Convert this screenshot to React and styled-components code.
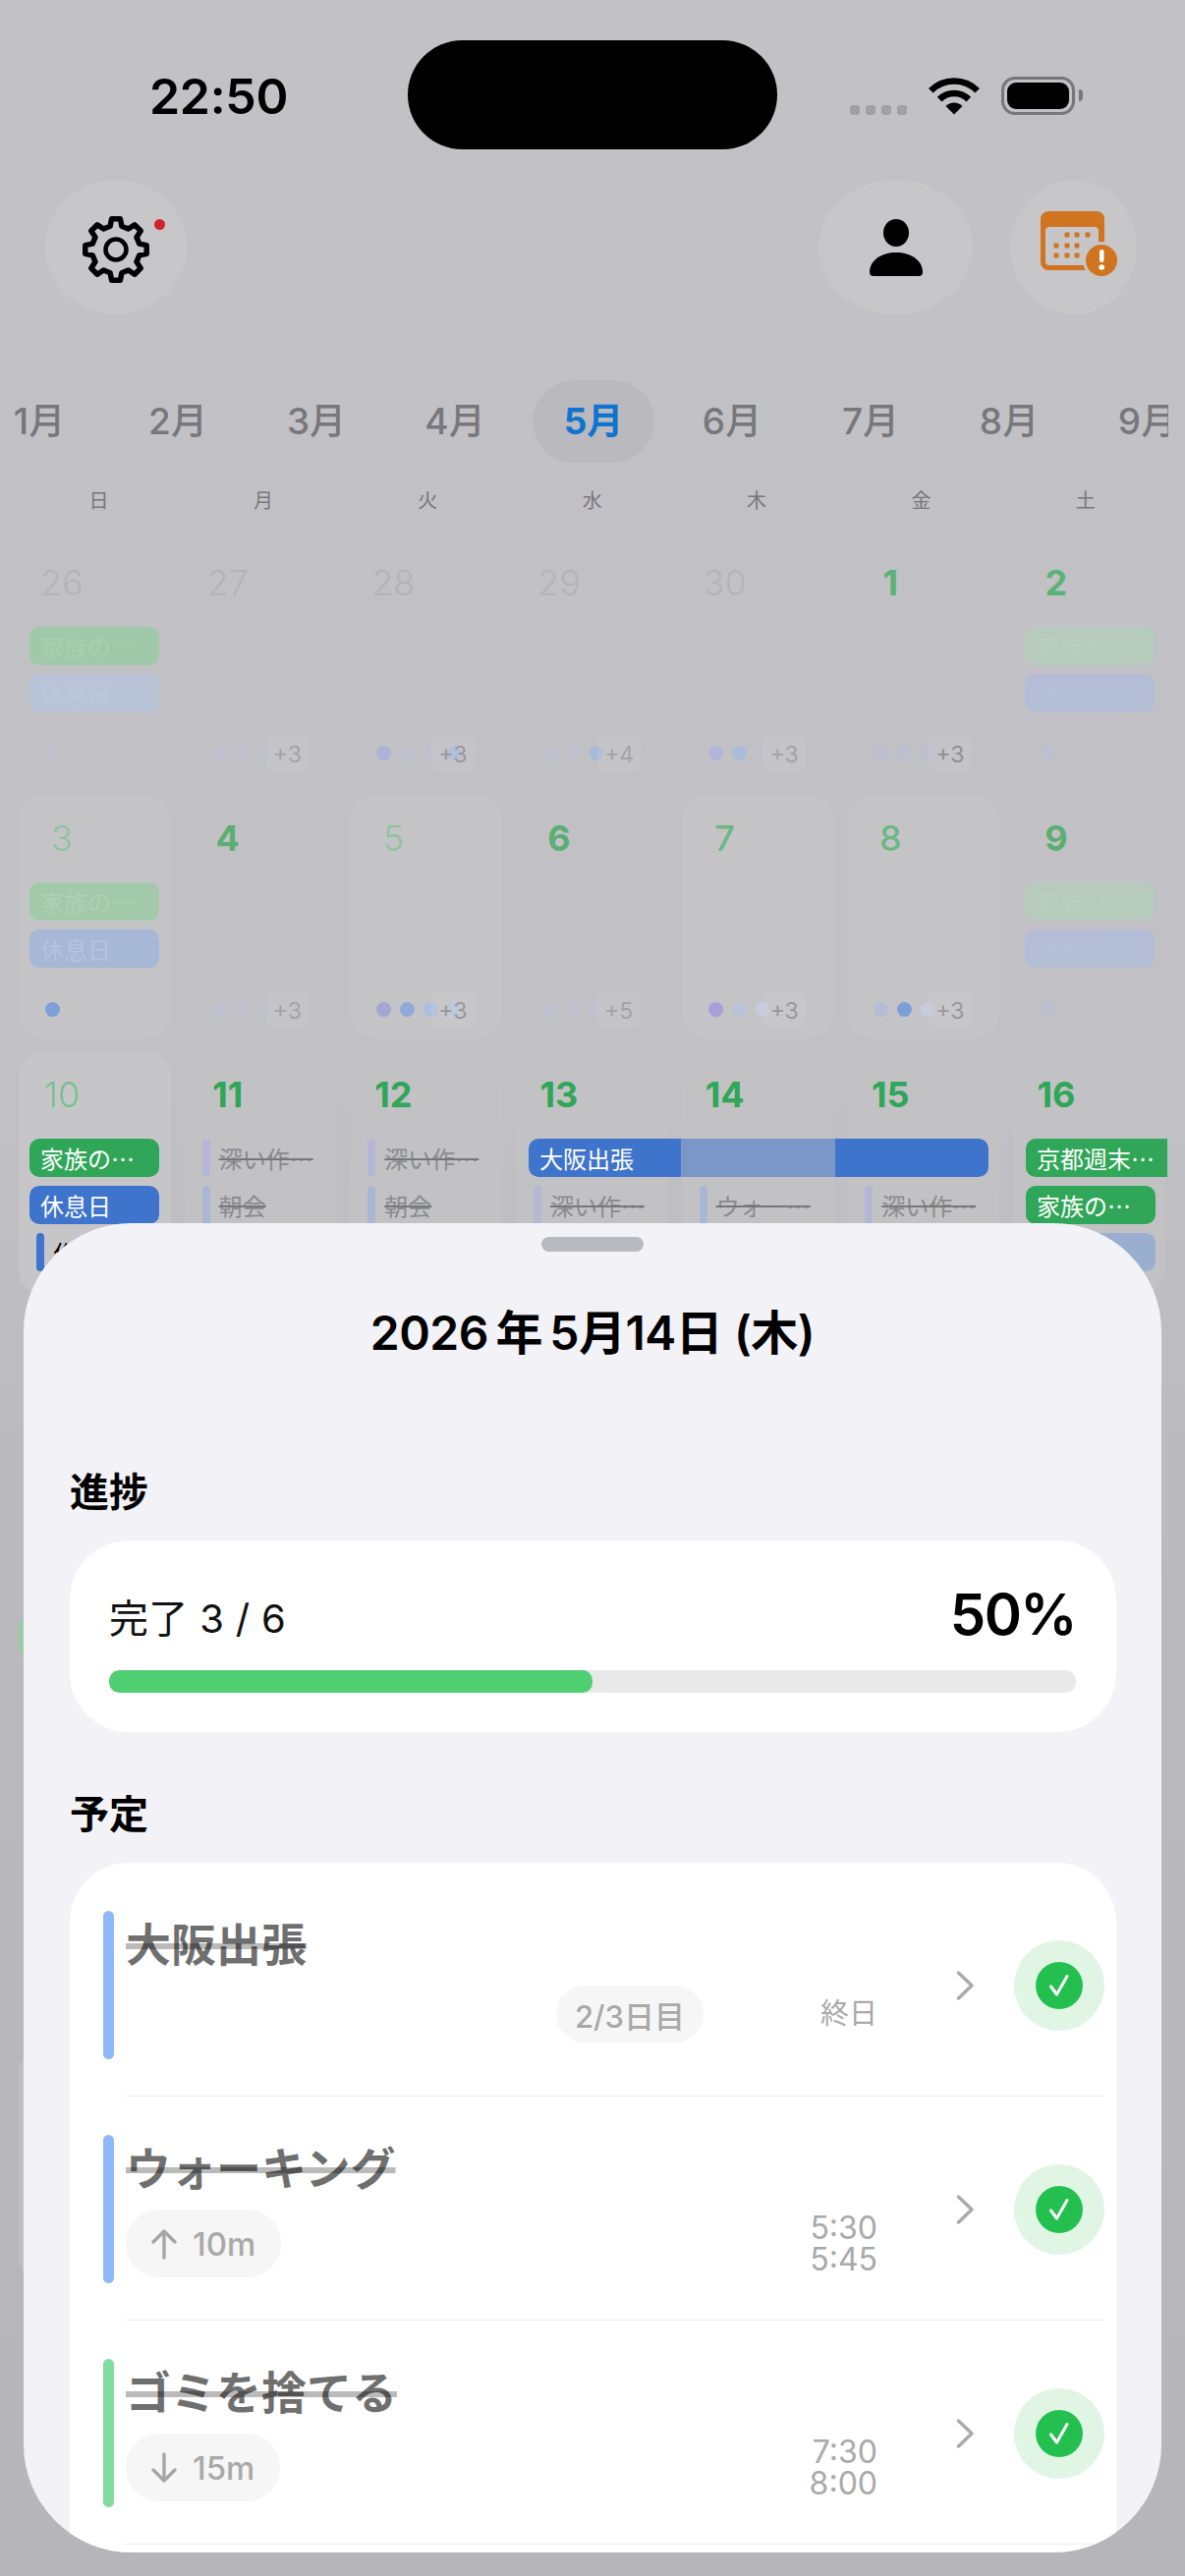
import React from 'react'
import styled, { createGlobalStyle } from 'styled-components'

const Global = createGlobalStyle`
  html, body { margin: 0; padding: 0; }
  body { font-family: Inter, "Noto Sans CJK JP", sans-serif; background: #c1c1c6; }
`

const Page = styled.div`
  position: relative;
  width: 1206px;
  height: 2622px;
  overflow: hidden;
  background: linear-gradient(180deg, #c1c1c6 0, #c1c1c5 1100px, #bbbbbf 1500px, #b6b6ba 100%);
`

const StatusBar = styled.div`
  display: flex;
  align-items: center;
  padding-top: 41px;
  height: 111px;
`
const Time = styled.div`
  width: 263px;
  padding-left: 152px;
  font-size: 50px;
  line-height: 60px;
  font-weight: 600;
  color: #000;
  letter-spacing: -0.3px;
  margin-top: 3px;
`
const Island = styled.div`
  width: 376px;
  height: 111px;
  border-radius: 56px;
  background: #000;
`
const StatusRight = styled.div`
  display: flex;
  align-items: flex-end;
  padding-left: 74px;
  height: 39px;
  margin-top: 1px;
`
const SignalDots = styled.div`
  display: flex;
  gap: 6px;
  margin-right: 22px;
`
const SignalDot = styled.span`
  width: 10px;
  height: 10px;
  border-radius: 3px;
  background: #a1a1a5;
`
const Battery = styled.div`
  position: relative;
  box-sizing: border-box;
  width: 75px;
  height: 39px;
  margin-left: 22px;
  padding: 3px;
  border: 3px solid #77777b;
  border-radius: 14px;

  &::before {
    content: '';
    display: block;
    height: 100%;
    background: #000;
    border-radius: 9px;
  }
  &::after {
    content: '';
    position: absolute;
    right: -11px;
    top: 10px;
    width: 4px;
    height: 12px;
    background: #77777b;
    border-radius: 0 6px 6px 0;
  }
`

const Toolbar = styled.div`
  display: flex;
  align-items: center;
  margin-top: 31px;
  padding: 0 49px 0 46px;
`
const RoundButton = styled.div`
  position: relative;
  width: ${p => p.$w}px;
  height: 137px;
  margin-left: ${p => p.$ml || 0}px;
  border-radius: 50%;
  background: #c7c7c9;
  display: flex;
  align-items: center;
  justify-content: center;
`
const RedDot = styled.span`
  position: absolute;
  left: 111px;
  top: 40px;
  width: 11px;
  height: 11px;
  border-radius: 50%;
  background: #d0242c;
`

const Months = styled.div`
  display: flex;
  gap: 17px;
  width: 1211px;
  margin: 67px 0 0 -22px;
  overflow: hidden;
`
const Month = styled.div`
  flex: 0 0 124px;
  height: 84px;
  border-radius: 42px;
  background: ${p => (p.$active ? '#b9b9be' : 'transparent')};
  color: ${p => (p.$active ? '#0f74d0' : '#77777c')};
  font-size: 37px;
  font-weight: ${p => (p.$active ? 700 : 500)};
  line-height: 84px;
  text-align: center;
`

const Weekdays = styled.div`
  display: grid;
  grid-template-columns: repeat(7, 155px);
  column-gap: 12.4px;
  padding-left: 23px;
  margin-top: 24px;
  color: #77777c;
  font-size: 20px;
  line-height: 30px;
  text-align: center;
`

const Calendar = styled.div`
  display: flex;
  flex-direction: column;
  row-gap: 13px;
  margin-top: 24px;
  padding-left: 19px;
`
const Week = styled.div`
  display: grid;
  grid-template-columns: repeat(7, 155px);
  column-gap: 13.67px;
  height: ${p => p.$h}px;
`
const Cell = styled.div`
  display: flex;
  flex-direction: column;
  min-width: 0;
  border-radius: 26px;
  background: ${p => p.$bg || 'transparent'};
`
const DayNum = styled.div`
  width: 88px;
  height: 89px;
  line-height: 88px;
  text-align: center;
  font-size: 36px;
  font-weight: ${p => p.$w};
  color: ${p => p.$c};
`
const Events = styled.div`
  display: flex;
  flex-direction: column;
  row-gap: 9px;
`
const Pill = styled.div`
  box-sizing: border-box;
  width: ${p => p.$width || 132}px;
  height: 39px;
  margin-left: ${p => (p.$ml !== undefined ? p.$ml : 11)}px;
  padding-left: 11px;
  border-radius: ${p => (p.$flat ? '10px 0 0 10px' : '10px')};
  background: ${p => p.$bg};
  color: ${p => p.$c || '#fff'};
  font-family: "Noto Sans CJK JP", sans-serif;
  font-size: 24px;
  line-height: 39px;
  white-space: nowrap;
  overflow: hidden;
`
const SpanPill = styled(Pill)`
  position: relative;
  z-index: 1;
  background: linear-gradient(90deg, #3f74cd 155px, #7b97c8 155px, #7b97c8 312px, #3f74cd 312px);
`
const PillGap = styled.div`
  height: 39px;
`
const Task = styled.div`
  display: flex;
  align-items: center;
  height: 39px;
  margin-left: 18px;
  column-gap: 9px;
`
const TaskBar = styled.span`
  flex: 0 0 8px;
  height: 39px;
  border-radius: 4px;
  background: ${p => p.$c};
`
const TaskText = styled.span`
  font-family: "Noto Sans CJK JP", sans-serif;
  font-size: 24px;
  white-space: nowrap;
  color: ${p => (p.$done ? '#8a8a8e' : '#000')};
  text-decoration: ${p => (p.$done ? 'line-through' : 'none')};
  text-decoration-thickness: 2px;
  text-decoration-color: #77777b;
`
const DotRow = styled.div`
  position: relative;
  display: flex;
  column-gap: 9px;
  height: 30px;
  align-items: center;
  margin-top: auto;
  margin-bottom: 15px;
  padding-left: 27px;
`
const Dot = styled.span`
  width: 15px;
  height: 15px;
  border-radius: 50%;
  background: ${p => p.$c};
`
const More = styled.span`
  position: absolute;
  left: 83px;
  top: -2px;
  padding: 0 7px;
  height: 36px;
  line-height: 38px;
  border-radius: 6px;
  font-size: 23px;
  color: ${p => p.$c || '#a3a3a7'};
  background: rgba(205, 205, 208, 0.3);
`

/* 下のシート */
const Sheet = styled.div`
  position: absolute;
  left: 24px;
  top: 1245px;
  width: 1158px;
  height: 1353px;
  border-radius: 110px;
  overflow: hidden;
  background: #f2f2f7;
`
const Handle = styled.div`
  width: 104px;
  height: 15px;
  margin: 14px auto 0;
  border-radius: 8px;
  background: #b9b9c0;
`
const SheetTitle = styled.div`
  margin-top: 53px;
  font-size: 48px;
  line-height: 60px;
  font-weight: 600;
  letter-spacing: -0.5px;
  text-align: center;
  color: #000;
`
const SectionLabel = styled.div`
  margin: ${p => p.$mt}px 0 24px 47px;
  font-size: 40px;
  line-height: 50px;
  font-weight: 700;
  color: #000;
`
const ProgressCard = styled.div`
  box-sizing: border-box;
  height: 195px;
  margin: 0 46px 0 47px;
  padding: 40px 41px 0 40px;
  border-radius: 60px;
  background: #fff;
`
const ProgressHead = styled.div`
  display: flex;
  justify-content: space-between;
  align-items: flex-start;
  height: 70px;
`
const DoneText = styled.span`
  font-size: 40px;
  line-height: 80px;
  letter-spacing: 0.3px;
  color: #111;
`
const Percent = styled.span`
  font-size: 58px;
  line-height: 70px;
  font-weight: 600;
  letter-spacing: -1.6px;
  color: #000;
`
const Track = styled.div`
  height: 23px;
  margin-top: 22px;
  border-radius: 10px;
  background: #e9e9ea;
  overflow: hidden;
`
const Fill = styled.div`
  height: 100%;
  border-radius: 10px;
  background: #50cf72;
`
const ListCard = styled.div`
  margin: 0 46px 0 47px;
  padding-top: 10px;
  min-height: 800px;
  border-radius: 60px;
  background: #fff;
`
const Row = styled.div`
  display: flex;
  align-items: center;
  padding: 39px 12px 37px 34px;
`
const RowBar = styled.div`
  flex: 0 0 11px;
  height: 151px;
  margin-right: 12px;
  border-radius: 6px;
  background: ${p => p.$c};
`
const RowBody = styled.div`
  flex: 1;
  align-self: flex-start;
`
const RowTitle = styled.div`
  height: 68px;
  line-height: 68px;
  font-size: 46px;
  font-weight: 600;
  color: rgba(0, 0, 0, 0.56);
  text-decoration: line-through;
  text-decoration-color: rgba(0, 0, 0, 0.27);
  text-decoration-thickness: 6px;
`
const Meta = styled.div`
  display: flex;
  align-items: center;
  margin-top: 8px;
`
const Chip = styled.div`
  display: flex;
  align-items: center;
  box-sizing: border-box;
  height: ${p => p.$h}px;
  padding: 0 ${p => p.$pad}px;
  column-gap: 16px;
  border-radius: 34px;
  background: #f6f6f6;
  color: #a9a9a9;
  font-size: ${p => p.$fs}px;
  font-weight: 500;
  margin-left: ${p => (p.$right ? 'auto' : '0')};
  margin-right: ${p => (p.$right ? '0' : 'auto')};
`
const TimeCol = styled.div`
  flex: 0 0 ${p => p.$w}px;
  margin-right: -1px;
  text-align: right;
  color: #a9a9a9;
  font-size: ${p => p.$fs || 32}px;
  line-height: 32px;
`
const Divider = styled.div`
  height: 1px;
  margin: 0 12px 0 57px;
  background: #ececec;
`
const Chevron = styled.svg`
  flex: 0 0 18px;
  width: 18px;
  height: 30px;
  margin-left: 81px;
`
const CheckWrap = styled.div`
  flex: 0 0 92px;
  width: 92px;
  height: 92px;
  margin-left: 41px;
  border-radius: 50%;
  background: #e1f5e5;
  display: flex;
  align-items: center;
  justify-content: center;
`

const gearPath = (() => {
  const pts = []
  for (let i = 0; i < 8; i++) {
    const a = i * 45 - 90
    ;[[24.5, -14], [31.5, -8], [31.5, 8], [24.5, 14]].forEach(([r, d]) => {
      const t = ((a + d) * Math.PI) / 180
      pts.push(`${(36 + r * Math.cos(t)).toFixed(1)} ${(36 + r * Math.sin(t)).toFixed(1)}`)
    })
  }
  return 'M' + pts.join('L') + 'Z'
})()

const GearSvg = styled.svg`
  margin-top: 4px;
`
const Gear = () => (
  <GearSvg width="72" height="72" viewBox="0 0 72 72" fill="none" stroke="#000" strokeLinejoin="round">
    <path d={gearPath} strokeWidth="5.5" />
    <circle cx="36" cy="36" r="10.5" strokeWidth="4.5" />
  </GearSvg>
)

const Wifi = () => (
  <svg width="52" height="38" viewBox="0 0 52 38" fill="none">
    <path d="M2.3 13.3A33.5 33.5 0 0 1 49.7 13.3" stroke="#000" strokeWidth="6.5" />
    <path d="M11.15 22.15A21 21 0 0 1 40.85 22.15" stroke="#000" strokeWidth="6.5" />
    <path d="M26 37.5L17.5 29A12 12 0 0 1 34.5 29Z" fill="#000" />
  </svg>
)

const Person = () => (
  <svg width="54" height="58" viewBox="0 0 54 58" fill="#000">
    <ellipse cx="27" cy="14" rx="13" ry="14" />
    <path d="M4 58H50Q54 58 54 54C54 42 42 34 27 34C12 34 0 42 0 54Q0 58 4 58Z" />
  </svg>
)

const calDots = [[27, 24], [37, 24], [48, 24], [16, 35], [27, 35], [37, 35], [16, 45], [27, 45], [37, 45]]

const CalSvg = styled.svg`
  margin: 4px 0 0 14px;
`
const CalendarAlert = () => (
  <CalSvg width="82" height="78" viewBox="0 0 82 78">
    <rect x="0" y="0" width="65" height="60" rx="8" fill="#d1741f" />
    <rect x="5" y="16" width="54" height="39" rx="4" fill="#c6c6c8" />
    {calDots.map(([x, y]) => (
      <rect key={x + '-' + y} x={x - 2.5} y={y - 2.5} width="5" height="5" rx="1" fill="#d1741f" />
    ))}
    <circle cx="62" cy="50" r="19" fill="#c6c6c8" />
    <circle cx="62" cy="50" r="16" fill="#d1741f" />
    <rect x="60" y="39" width="4.5" height="13" rx="2.2" fill="#fff" />
    <circle cx="62.2" cy="57" r="2.8" fill="#fff" />
  </CalSvg>
)

const ChevronIcon = () => (
  <Chevron viewBox="0 0 18 30" fill="none" stroke="#a9a9a9" strokeWidth="3.4" strokeLinecap="round" strokeLinejoin="round">
    <path d="M2.5 2L16 15L2.5 28" />
  </Chevron>
)

const Check = () => (
  <CheckWrap>
    <svg width="48" height="48" viewBox="0 0 48 48">
      <circle cx="24" cy="24" r="24" fill="#23c04f" />
      <path d="M15.5 25L21.5 33L32 14.5" fill="none" stroke="#fff" strokeWidth="3" strokeLinecap="round" strokeLinejoin="round" />
    </svg>
  </CheckWrap>
)

const Arrow = ({ down }) => (
  <svg width="26" height="32" viewBox="0 0 26 32" fill="none" stroke="#a6a6a6" strokeWidth="3.4" strokeLinecap="round" strokeLinejoin="round">
    <path d={down ? 'M13 2V29M2 18L13 29L24 18' : 'M13 30V3M2 14L13 3L24 14'} />
  </svg>
)

const months = ['1月', '2月', '3月', '4月', '5月', '6月', '7月', '8月', '9月']
const weekdays = ['日', '月', '火', '水', '木', '金', '土']

const G_FADE = '#a0c9a9'
const G_PALE = '#b6cbbc'
const B_FADE = '#b9c3d6'
const B_PALE = '#b3bdd5'
const GREEN = '#2fa658'
const BLUE = '#3f74cd'
const LIGHT = '#c4c4c7'
const SOFT = '#c2c2c5'
const GREY_N = '#b4b4b8'
const F1 = '#bdbfd0'
const F2 = '#c0c1cc'

const week1 = [
  { n: 26, c: GREY_N, w: 300, events: [{ t: '家族の…', bg: G_FADE, c: '#a8cfb1' }, { t: '休息日', bg: B_FADE, c: '#bcc7da' }], dots: [F2] },
  { n: 27, c: GREY_N, w: 300, dots: [F2, F2, F2], more: 3 },
  { n: 28, c: GREY_N, w: 300, dots: ['#b0b0d8', F2, F2, '#a9bbdb'], more: 3, moreC: '#98989c' },
  { n: 29, c: GREY_N, w: 300, dots: [F2, F2, '#a8bada'], more: 4 },
  { n: 30, c: GREY_N, w: 300, dots: ['#b3b6d8', '#a9bcd9', F2], more: 3 },
  { n: 1, c: '#5cb377', w: 700, dots: [F1, F1, F1], more: 3, moreC: '#8f8f93' },
  { n: 2, c: '#5cb377', w: 700, events: [{ t: '家族の…', bg: G_PALE, c: '#bacfc0', ml: 12 }, { t: '休息日', bg: B_PALE, c: '#b7c0d7', ml: 12 }], dots: [F1] },
]

const week2 = [
  { n: 3, c: '#8cc59c', w: 300, bg: LIGHT, events: [{ t: '家族の…', bg: '#a2c9aa', c: '#aed1b6' }, { t: '休息日', bg: '#a6b8d6', c: '#b5c3dd' }], dots: ['#7e9fd8'] },
  { n: 4, c: '#5cae73', w: 700, dots: [F2, F2, F2], more: 3 },
  { n: 5, c: '#8cc59c', w: 300, bg: LIGHT, dots: ['#a5a4d3', '#8fa9d9', '#a9bfe0', '#b4c8df'], more: 3, moreC: '#98989c' },
  { n: 6, c: '#5cae73', w: 700, dots: [F2, F2, F2], more: 5 },
  { n: 7, c: '#6cb884', w: 500, bg: LIGHT, dots: ['#a69fd9', '#bcc1da', '#c8cbdc'], more: 3, moreC: '#98989c' },
  { n: 8, c: '#6cb884', w: 500, bg: LIGHT, dots: ['#b6bcd6', '#7d9fd9', '#c8cbdc'], more: 3, moreC: '#98989c' },
  { n: 9, c: '#5cae73', w: 700, events: [{ t: '家族の…', bg: G_PALE, c: '#bacfc0', ml: 12 }, { t: '休息日', bg: B_PALE, c: '#b7c0d7', ml: 12 }], dots: [F1] },
]

const deep = { task: '深い作…', bar: '#b6b6d6' }
const asakai = { task: '朝会', bar: '#a9b7d4' }

const week3 = [
  { n: 10, c: '#77c08e', w: 300, bg: '#c6c6c8', events: [{ t: '家族の…', bg: GREEN }, { t: '休息日', bg: BLUE }, { task: '作業', bar: BLUE, open: true }] },
  { n: 11, c: GREEN, w: 700, bg: SOFT, events: [deep, asakai] },
  { n: 12, c: GREEN, w: 700, bg: SOFT, events: [deep, asakai] },
  { n: 13, c: GREEN, w: 700, bg: SOFT, events: [{ t: '大阪出張', span: true }, deep] },
  { n: 14, c: GREEN, w: 700, bg: SOFT, events: [{ gap: true }, { task: 'ウォー…', bar: '#a9b7d4' }] },
  { n: 15, c: GREEN, w: 700, bg: SOFT, events: [{ gap: true }, deep] },
  { n: 16, c: GREEN, w: 700, bg: SOFT, events: [{ t: '京都週末…', bg: GREEN, ml: 13, width: 144, flat: true }, { t: '家族の…', bg: GREEN, ml: 13 }, { t: '', bg: '#9aaecf', ml: 13 }] },
]

const CalendarEvent = ({ e }) => {
  if (e.gap) return <PillGap />
  if (e.span) return <SpanPill $ml={13} $width={468} $bg={BLUE}>{e.t}</SpanPill>
  if (e.task) {
    return (
      <Task>
        <TaskBar $c={e.bar} />
        <TaskText $done={!e.open}>{e.task}</TaskText>
      </Task>
    )
  }
  return <Pill $bg={e.bg} $c={e.c} $ml={e.ml} $width={e.width} $flat={e.flat}>{e.t}</Pill>
}

const DayCell = ({ d }) => (
  <Cell $bg={d.bg}>
    <DayNum $c={d.c} $w={d.w}>{d.n}</DayNum>
    {d.events && (
      <Events>
        {d.events.map((e, i) => <CalendarEvent key={i} e={e} />)}
      </Events>
    )}
    {d.dots && (
      <DotRow>
        {d.dots.map((c, i) => <Dot key={i} $c={c} />)}
        {d.more && <More $c={d.moreC}>+{d.more}</More>}
      </DotRow>
    )}
  </Cell>
)

const ScheduleRow = ({ color, title, chip, time }) => (
  <Row>
    <RowBar $c={color} />
    <RowBody>
      <RowTitle>{title}</RowTitle>
      <Meta>
        {chip}
        {time}
      </Meta>
    </RowBody>
    <ChevronIcon />
    <Check />
  </Row>
)

export default function App() {
  return (
    <Page>
      <Global />
      <StatusBar>
        <Time>22:50</Time>
        <Island />
        <StatusRight>
          <SignalDots>
            {[0, 1, 2, 3].map(i => <SignalDot key={i} />)}
          </SignalDots>
          <Wifi />
          <Battery />
        </StatusRight>
      </StatusBar>

      <Toolbar>
        <RoundButton $w={144}>
          <Gear />
          <RedDot />
        </RoundButton>
        <RoundButton $w={157} $ml={643}><Person /></RoundButton>
        <RoundButton $w={129} $ml={38}><CalendarAlert /></RoundButton>
      </Toolbar>

      <Months>
        {months.map(m => <Month key={m} $active={m === '5月'}>{m}</Month>)}
      </Months>

      <Weekdays>
        {weekdays.map(w => <div key={w}>{w}</div>)}
      </Weekdays>

      <Calendar>
        <Week $h={247}>{week1.map(d => <DayCell key={d.n} d={d} />)}</Week>
        <Week $h={248}>{week2.map(d => <DayCell key={d.n} d={d} />)}</Week>
        <Week $h={248}>{week3.map(d => <DayCell key={d.n} d={d} />)}</Week>
        <Week $h={213} />
        <Week $h={247}>
          <Cell>
            <DayNum $c={GREEN} $w={700} />
            <Pill $ml={-1} $bg="#9fc8a9" />
          </Cell>
        </Week>
        <Week $h={253} />
        <Week $h={240}>
          <Cell $bg="#bfbfc3" />
        </Week>
      </Calendar>

      <Sheet>
        <Handle />
        <SheetTitle>2026&#8201;年&#8201;5月14日 (木)</SheetTitle>
        <SectionLabel $mt={107}>進捗</SectionLabel>
        <ProgressCard>
          <ProgressHead>
            <DoneText>完了 3 / 6</DoneText>
            <Percent>50%</Percent>
          </ProgressHead>
          <Track>
            <Fill style={{ width: '50%' }} />
          </Track>
        </ProgressCard>
        <SectionLabel $mt={59}>予定</SectionLabel>
        <ListCard>
          <ScheduleRow
            color="#8fb8fb"
            title="大阪出張"
            chip={<Chip $h={58} $pad={19} $fs={31} $right>2/3日目</Chip>}
            time={<TimeCol $w={177} $fs={29}>終日</TimeCol>}
          />
          <Divider />
          <ScheduleRow
            color="#8fb8fb"
            title="ウォーキング"
            chip={<Chip $h={69} $pad={26} $fs={33}><Arrow />10m</Chip>}
            time={<TimeCol $w={90}>5:30<br />5:45</TimeCol>}
          />
          <Divider />
          <ScheduleRow
            color="#84dba0"
            title="ゴミを捨てる"
            chip={<Chip $h={69} $pad={26} $fs={33}><Arrow down />15m</Chip>}
            time={<TimeCol $w={90}>7:30<br />8:00</TimeCol>}
          />
          <Divider />
        </ListCard>
      </Sheet>
    </Page>
  )
}
